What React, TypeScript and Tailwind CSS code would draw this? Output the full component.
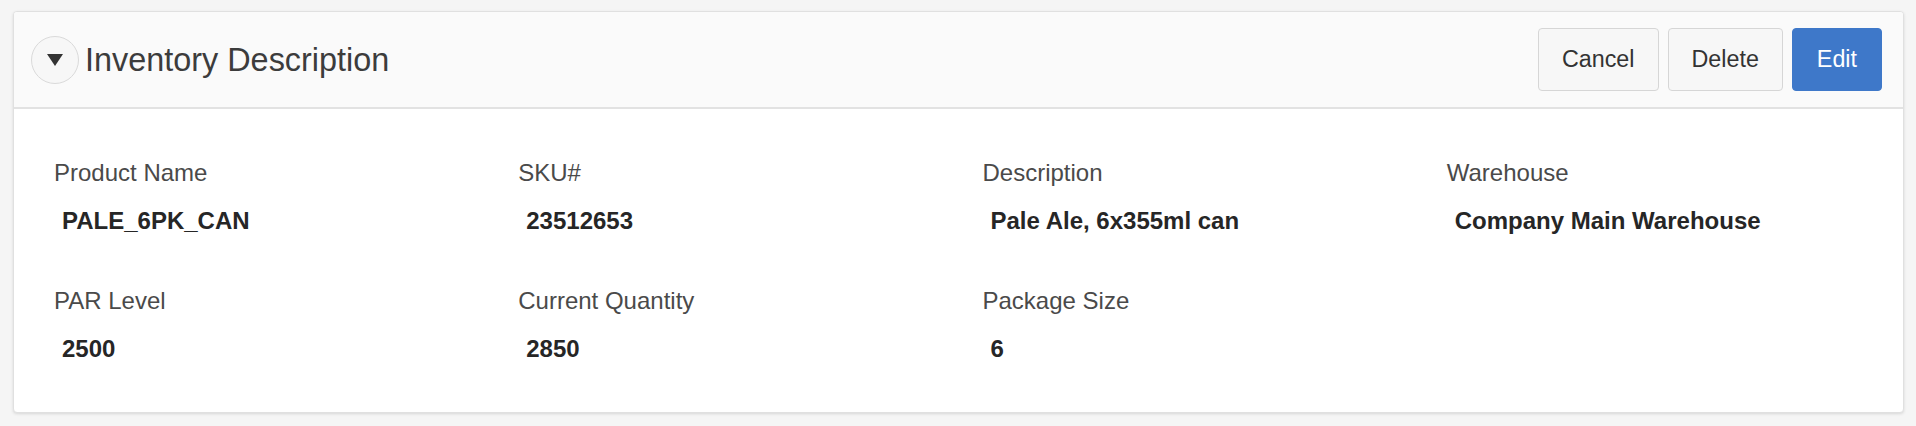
import React from "react";

const fields = [
  { label: "Product Name", value: "PALE_6PK_CAN" },
  { label: "SKU#", value: "23512653" },
  { label: "Description", value: "Pale Ale, 6x355ml can" },
  { label: "Warehouse", value: "Company Main Warehouse" },
  { label: "PAR Level", value: "2500" },
  { label: "Current Quantity", value: "2850" },
  { label: "Package Size", value: "6" },
];

export default function App() {
  return (
    <div
      className="w-full h-[426px] bg-[#f5f5f5] pt-[11px] pl-[13px] pr-[12px]"
      style={{ fontFamily: '"Liberation Sans", Arial, Helvetica, sans-serif' }}
    >
      <div className="w-[1891px] rounded-[4px] border border-[#e0e0e0] bg-white shadow-[0_1px_3px_rgba(0,0,0,0.12)] overflow-hidden">
        <div className="h-[97px] bg-[#fafafa] border-b-2 border-[#e2e2e2] flex items-center pl-[17px] pr-[21px]">
          <button className="w-[48px] h-[48px] rounded-full border-[1.5px] border-[#dadada] bg-[#f7f7f7] flex items-center justify-center shrink-0">
            <svg width="16" height="12" viewBox="0 0 16 12">
              <path d="M0 0 L16 0 L8 12 Z" fill="#333333" />
            </svg>
          </button>
          <h1 className="ml-[6px] text-[32.4px] leading-[38px] text-[#3c3c3c] font-normal">
            Inventory Description
          </h1>
          <div className="ml-auto flex items-center gap-[9px]">
            <button className="h-[63px] px-[23px] rounded-[4px] border border-[#d6d6d6] bg-[#f7f7f7] text-[23.3px] text-[#333333]">
              Cancel
            </button>
            <button className="h-[63px] px-[23px] rounded-[4px] border border-[#d6d6d6] bg-[#f7f7f7] text-[23.3px] text-[#333333]">
              Delete
            </button>
            <button className="h-[63px] px-[24px] rounded-[4px] border border-[#3e78c9] bg-[#3e78c9] text-[23.3px] text-white">
              Edit
            </button>
          </div>
        </div>
        <div className="pl-[40px] pt-[50px] pb-[49px]">
          <div className="w-[1857px] grid grid-cols-4 gap-y-[52px]">
            {fields.map((f) => (
              <div key={f.label} className="flex flex-col">
                <div className="text-[24px] leading-[28px] text-[#4a4a4a]">{f.label}</div>
                <div className="mt-[20px] pl-[8px] text-[24px] leading-[28px] font-bold text-[#262626]">
                  {f.value}
                </div>
              </div>
            ))}
          </div>
        </div>
      </div>
    </div>
  );
}
